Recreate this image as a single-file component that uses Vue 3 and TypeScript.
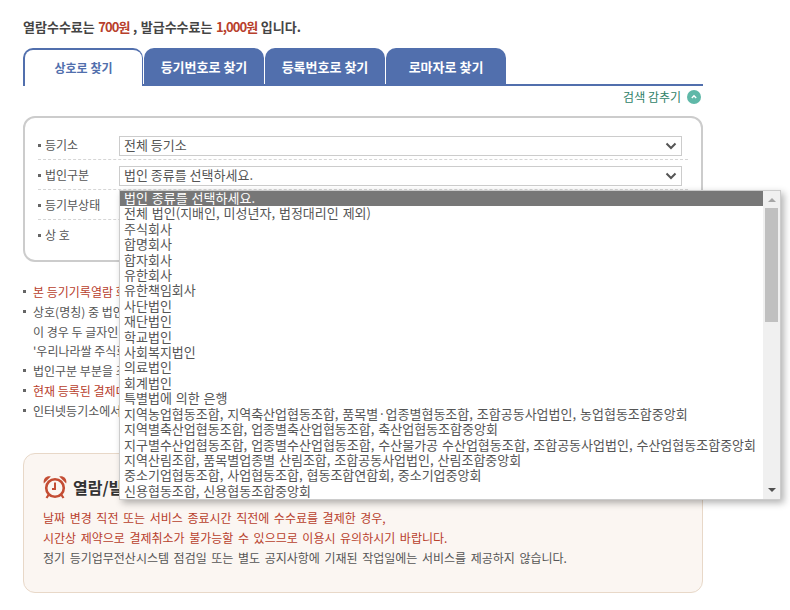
<script setup lang="ts">
const rows = [
  { label: '등기소', value: '전체 등기소' },
  { label: '법인구분', value: '법인 종류를 선택하세요.' },
  { label: '등기부상태', value: '살아있는 등기' },
  { label: '상 호', value: '' },
]
const tabs = ['상호로 찾기', '등기번호로 찾기', '등록번호로 찾기', '로마자로 찾기']
const notes = [
  { text: '본 등기기록열람 화면에서 확인하세요.', red: true },
  { text: '상호(명칭) 중 법인의 종류는 제외하고 검색합니다.', red: false },
  { text: '이 경우 두 글자인 상호는 전부 입력합니다.', red: false, indent: true },
  { text: '\'우리나라쌀 주식회사\'의 경우입니다.', red: false, indent: true },
  { text: '법인구분 부분을 조회 조건으로 선택합니다.', red: false },
  { text: '현재 등록된 결제대행 수단을 확인합니다.', red: true },
  { text: '인터넷등기소에서 제공하는 서비스입니다.', red: false },
]
const options = [
  '법인 종류를 선택하세요.',
  '전체 법인(지배인, 미성년자, 법정대리인 제외)',
  '주식회사',
  '합명회사',
  '합자회사',
  '유한회사',
  '유한책임회사',
  '사단법인',
  '재단법인',
  '학교법인',
  '사회복지법인',
  '의료법인',
  '회계법인',
  '특별법에 의한 은행',
  '지역농업협동조합, 지역축산업협동조합, 품목별·업종별협동조합, 조합공동사업법인, 농업협동조합중앙회',
  '지역별축산업협동조합, 업종별축산업협동조합, 축산업협동조합중앙회',
  '지구별수산업협동조합, 업종별수산업협동조합, 수산물가공 수산업협동조합, 조합공동사업법인, 수산업협동조합중앙회',
  '지역산림조합, 품목별업종별 산림조합, 조합공동사업법인, 산림조합중앙회',
  '중소기업협동조합, 사업협동조합, 협동조합연합회, 중소기업중앙회',
  '신용협동조합, 신용협동조합중앙회',
]
</script>

<template>
  <div class="page">
    <p class="fee">
      열람수수료는 <em>700원</em> , 발급수수료는 <em>1,000원</em> 입니다.
    </p>

    <div class="tabs">
      <div v-for="(t, i) in tabs" :key="t" class="tab" :class="{ active: i === 0 }">{{ t }}</div>
    </div>

    <div class="toggle">
      <span>검색 감추기</span>
      <svg width="14" height="14" viewBox="0 0 14 14">
        <circle cx="7" cy="7" r="7" fill="#5fb8a8" />
        <path d="M4.8 8 7 5.8 9.2 8" fill="none" stroke="#fff" stroke-width="1.4" />
      </svg>
    </div>

    <div class="search">
      <div v-for="(r, i) in rows" :key="r.label" class="row" :class="{ last: i === 3 }">
        <span class="label">{{ r.label }}</span>
        <div v-if="i < 3" class="select">
          <span>{{ r.value }}</span>
          <svg width="12" height="8" viewBox="0 0 12 8">
            <path d="M1.5 1.5 6 6l4.5-4.5" fill="none" stroke="#555" stroke-width="2" />
          </svg>
        </div>
        <div v-else class="select"></div>
      </div>
    </div>

    <ul class="notes">
      <li v-for="n in notes" :key="n.text" :class="{ red: n.red, indent: n.indent }">{{ n.text }}</li>
    </ul>

    <div class="notice">
      <div class="notice-title">
        <svg width="24" height="24" viewBox="0 0 24 24">
          <path d="M.8 8.4C-.2 3.6 3.4.2 7.8 1.4Z" fill="#c44d34" />
          <path d="M23.2 8.4C24.2 3.6 20.6.2 16.2 1.4Z" fill="#c44d34" />
          <circle cx="12" cy="13" r="8.8" fill="#fbf6f2" stroke="#c44d34" stroke-width="2.6" />
          <path d="M12 7.5V14H9" fill="none" stroke="#c44d34" stroke-width="2" />
          <path d="M5.5 20 3.5 23M18.5 20l2 3" fill="none" stroke="#c44d34" stroke-width="2.2" />
        </svg>
        <strong>열람/발급 시 유의사항</strong>
      </div>
      <p class="red">날짜 변경 직전 또는 서비스 종료시간 직전에 수수료를 결제한 경우,</p>
      <p class="red">시간상 제약으로 결제취소가 불가능할 수 있으므로 이용시 유의하시기 바랍니다.</p>
      <p>정기 등기업무전산시스템 점검일 또는 별도 공지사항에 기재된 작업일에는 서비스를 제공하지 않습니다.</p>
    </div>

    <div class="dropdown">
      <div class="opts">
        <div v-for="(o, i) in options" :key="o" class="opt" :class="{ sel: i === 0 }">{{ o }}</div>
      </div>
      <div class="scroll">
        <svg class="arrow" width="10" height="6" viewBox="0 0 10 6"><path d="M5 1 9 5H1Z" fill="#a6a6a6" /></svg>
        <div class="track"><div class="thumb"></div></div>
        <svg class="arrow" width="10" height="6" viewBox="0 0 10 6"><path d="M1 1H9L5 5Z" fill="#505050" /></svg>
      </div>
    </div>
  </div>
</template>

<style scoped>
.page {
  position: relative;
  width: 680px;
  height: 610px;
  box-sizing: border-box;
  margin-left: 23px;
  padding-top: 19px;
  font-family: "Noto Sans CJK KR", "Liberation Sans", sans-serif;
  font-size: 12px;
  color: #555;
  overflow: visible;
}
p { margin: 0; }
.fee {
  height: 29px;
  line-height: 15px;
  font-size: 13px;
  font-weight: 700;
  color: #444;
  word-spacing: 0.5px;
}
.fee em { font-style: normal; color: #b8402c; letter-spacing: -0.9px; }
.tabs {
  display: flex;
  gap: 1px;
  border-bottom: 2px solid #516fad;
  height: 36px;
}
.tab {
  width: 120px;
  height: 38px;
  box-sizing: border-box;
  padding-bottom: 2px;
  display: flex;
  align-items: center;
  justify-content: center;
  background: #516fad;
  color: #fff;
  font-size: 13px;
  font-weight: 700;
  border-radius: 10px 10px 0 0;
}
.tab.active {
  background: #fff;
  color: #516fad;
  font-size: 12px;
  border: 2px solid #516fad;
  border-bottom: 0;
  border-right-width: 1px;
}
.toggle {
  height: 30px;
  display: flex;
  justify-content: flex-end;
  align-items: flex-start;
  gap: 6px;
  padding: 4px 2px 0 0;
  box-sizing: border-box;
  color: #2f7f68;
  line-height: 14px;
}
.search {
  height: 146px;
  box-sizing: border-box;
  border: 2px solid #ccc;
  border-radius: 12px;
  padding: 12px 13px 0;
}
.row {
  height: 30px;
  box-sizing: border-box;
  display: flex;
  align-items: flex-start;
  padding-top: 6px;
  border-bottom: 1px dashed #d6d6d6;
}
.row.last { border-bottom: 0; }
.label {
  width: 81px;
  flex: none;
  line-height: 18px;
  padding-left: 7px;
  box-sizing: border-box;
  position: relative;
}
.label::before {
  content: "";
  position: absolute;
  left: 0;
  top: 8px;
  width: 3px;
  height: 3px;
  background: #666;
}
.select {
  width: 563px;
  height: 20px;
  box-sizing: border-box;
  border: 1px solid #ccc;
  display: flex;
  align-items: center;
  justify-content: space-between;
  padding: 0 4px;
  background: #fff;
  font-size: 13px;
  line-height: 16px;
}
.select span { margin-top: -2px; }
.notes {
  list-style: none;
  margin: 20px 0 0;
  padding: 0 0 0 10px;
  height: 165px;
  box-sizing: border-box;
  line-height: 19.8px;
  white-space: nowrap;
}
.notes li { position: relative; }
.notes li:not(.indent)::before {
  content: "";
  position: absolute;
  left: -10px;
  top: 8px;
  width: 3px;
  height: 3px;
  background: #666;
}
.red { color: #b8402c; }
.notice {
  height: 140px;
  box-sizing: border-box;
  margin-top: 6px;
  background: #fbf6f2;
  border: 1px solid #e8d8c8;
  border-radius: 12px;
  padding: 21px 19px;
  line-height: 20px;
  word-spacing: 1.9px;
}
.notice-title {
  display: flex;
  align-items: center;
  gap: 6px;
  height: 24px;
  margin-bottom: 9px;
  font-size: 16px;
  color: #333;
}
.dropdown {
  position: absolute;
  left: 96px;
  top: 190px;
  width: 662px;
  height: 310px;
  box-sizing: border-box;
  background: #fff;
  border: 1px solid #ccc;
  box-shadow: 3px 3px 7px rgba(0, 0, 0, 0.3);
  display: flex;
  z-index: 5;
  font-size: 13px;
}
.opts {
  flex: 1;
  min-width: 0;
  white-space: nowrap;
  word-spacing: 1px;
}
.opt {
  height: 15.42px;
  line-height: 13px;
  padding-left: 4px;
  color: #555;
}
.opt.sel { background: #777; color: #fff; }
.scroll {
  width: 17px;
  flex: none;
  background: #f0f0f0;
  display: flex;
  flex-direction: column;
  align-items: center;
}
.arrow { flex: none; margin: 6px 0; }
.track { flex: 1; width: 100%; }
.thumb {
  width: 13px;
  height: 114px;
  margin: -1px auto 0;
  background: #c0c0c0;
}
</style>
